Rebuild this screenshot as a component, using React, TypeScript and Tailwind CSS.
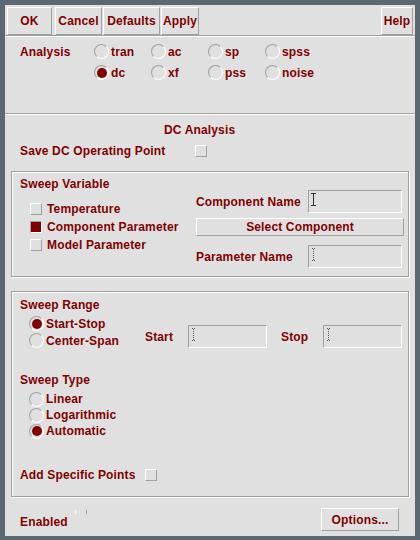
import React from 'react';

const RED = 'text-[#800000]';
const raised = 'border border-t-white border-l-white border-b-[#a0a0a0] border-r-[#a0a0a0]';
const sunken = 'border border-t-[#a0a0a0] border-l-[#a0a0a0] border-b-white border-r-white';
const etched = 'border border-[#a0a0a0] shadow-[inset_1px_1px_0_#fff,1px_1px_0_#fff]';

const ToolButton = ({ label, w }: { label: string; w: string }) => (
  <div className={`${raised} ${w} h-[28px] flex items-center justify-center`}>{label}</div>
);

const Radio = ({ label, checked, h = 'h-[21px]' }: { label: string; checked?: boolean; h?: string }) => (
  <div className={`flex items-center ${h}`}>
    <span className={`${sunken} w-[15px] h-[15px] rounded-full flex items-center justify-center shrink-0`}>
      {checked && <span className="w-[10px] h-[10px] rounded-full bg-[#800000]" />}
    </span>
    <span className="ml-[2px] leading-[16px]">{label}</span>
  </div>
);

const Check = ({ checked }: { checked?: boolean }) =>
  checked ? (
    <span className={`${sunken} w-[12px] h-[12px] bg-[#800000] shrink-0`} />
  ) : (
    <span className={`${raised} w-[12px] h-[12px] shrink-0`} />
  );

const CheckRow = ({ label, checked }: { label: string; checked?: boolean }) => (
  <div className="flex items-center h-[18px]">
    <Check checked={checked} />
    <span className="ml-[5px] leading-[16px]">{label}</span>
  </div>
);

const Cursor = ({ dotted }: { dotted?: boolean }) =>
  dotted ? (
    <svg width="5" height="13" viewBox="0 0 5 13" className="ml-[2px] mt-[2px]">
      <path d="M1 0.5H2 M3 0.5H4 M2.5 1V12" stroke="#555" strokeWidth="1" strokeDasharray="1 1" fill="none" />
      <path d="M1 12.5H4" stroke="#555" strokeWidth="1" strokeDasharray="1 1" fill="none" />
    </svg>
  ) : (
    <svg width="5" height="13" viewBox="0 0 5 13" className="ml-[2px] mt-[2px]">
      <path d="M0 0.5H5 M2.5 0.5V12.5 M0 12.5H5" stroke="#333" strokeWidth="1" fill="none" />
    </svg>
  );

const Field = ({ w, dotted }: { w: string; dotted?: boolean }) => (
  <div className={`${sunken} ${w} h-[23px] flex items-start`}>
    <Cursor dotted={dotted} />
  </div>
);

export default function App() {
  return (
    <div
      className={`w-[420px] h-[540px] bg-[#e0e0e0] border-[5px] border-b-[4px] border-[#5b6872] flex flex-col font-['Liberation_Sans',Arial,sans-serif] font-bold text-[12px] tracking-[0.15px] ${RED}`}
    >
      {/* toolbar */}
      <div className="h-[30px] pt-[2px] px-[2px] flex">
        <ToolButton label="OK" w="w-[45px]" />
        <div className="ml-[3px]"><ToolButton label="Cancel" w="w-[47px]" /></div>
        <div className="ml-[1px]"><ToolButton label="Defaults" w="w-[57px]" /></div>
        <div className="ml-[1px]"><ToolButton label="Apply" w="w-[38px]" /></div>
        <div className="ml-auto"><ToolButton label="Help" w="w-[32px]" /></div>
      </div>
      <div className="h-[1px] bg-[#a0a0a0]" />
      <div className="h-[1px] bg-white" />

      {/* analysis */}
      <div className="h-[76px] pt-[4px] pl-[15px] flex items-start">
        <div className="w-[74px] h-[21px] flex items-center leading-[16px]">Analysis</div>
        <div className="grid grid-cols-[57px_57px_57px_57px] content-start">
          <Radio label="tran" />
          <Radio label="ac" />
          <Radio label="sp" />
          <Radio label="spss" />
          <Radio label="dc" checked />
          <Radio label="xf" />
          <Radio label="pss" />
          <Radio label="noise" />
        </div>
      </div>
      <div className="h-[1px] bg-[#a0a0a0]" />
      <div className="h-[1px] bg-white" />

      <div className="mt-[7px] pl-[159px] leading-[16px]">DC Analysis</div>
      <div className="mt-[5px] h-[16px] pl-[15px] flex items-center">
        <span className="w-[175px] leading-[16px]">Save DC Operating Point</span>
        <Check />
      </div>

      {/* sweep variable */}
      <div className={`${etched} mt-[12px] mx-[6px] h-[106px] flex`}>
        <div className="w-[184px] pt-[4px]">
          <div className="pl-[8px] leading-[16px]">Sweep Variable</div>
          <div className="mt-[8px] pl-[18px]">
            <CheckRow label="Temperature" />
            <CheckRow label="Component Parameter" checked />
            <CheckRow label="Model Parameter" />
          </div>
        </div>
        <div className="pt-[18px]">
          <div className="flex items-center">
            <span className="w-[112px] leading-[16px]">Component Name</span>
            <Field w="w-[94px]" />
          </div>
          <div className={`${raised} mt-[5px] w-[208px] h-[18px] flex items-center justify-center`}>
            Select Component
          </div>
          <div className="mt-[9px] flex items-center">
            <span className="w-[112px] leading-[16px]">Parameter Name</span>
            <Field w="w-[94px]" dotted />
          </div>
        </div>
      </div>

      {/* sweep range / type */}
      <div className={`${etched} mt-[14px] mx-[6px] h-[206px] pt-[5px]`}>
        <div className="pl-[8px] leading-[16px]">Sweep Range</div>
        <div className="mt-[2px] flex items-start">
          <div className="w-[133px] pl-[17px]">
            <Radio label="Start-Stop" checked h="h-[17px]" />
            <Radio label="Center-Span" h="h-[17px]" />
          </div>
          <div className="mt-[10px] flex items-center">
            <span className="w-[43px] leading-[16px]">Start</span>
            <Field w="w-[79px]" dotted />
            <span className="ml-[14px] w-[42px] leading-[16px]">Stop</span>
            <Field w="w-[79px]" dotted />
          </div>
        </div>
        <div className="mt-[23px] pl-[8px] leading-[16px]">Sweep Type</div>
        <div className="mt-[3px] pl-[17px]">
          <Radio label="Linear" h="h-[16px]" />
          <Radio label="Logarithmic" h="h-[16px]" />
          <Radio label="Automatic" checked h="h-[16px]" />
        </div>
        <div className="mt-[28px] h-[16px] pl-[8px] flex items-center">
          <span className="w-[125px] leading-[16px]">Add Specific Points</span>
          <Check />
        </div>
      </div>

      {/* bottom bar */}
      <div className="flex-1 pl-[15px] pr-[16px] flex items-start">
        <span className="mt-[17px] w-[55px] leading-[16px]">Enabled</span>
        <span className="mt-[13px] w-[1px] h-[4px] bg-white" />
        <span className="mt-[13px] ml-[10px] w-[1px] h-[4px] bg-[#a0a0a0]" />
        <div className={`${raised} ml-auto mt-[11px] w-[78px] h-[23px] flex items-center justify-center`}>
          Options...
        </div>
      </div>
    </div>
  );
}
